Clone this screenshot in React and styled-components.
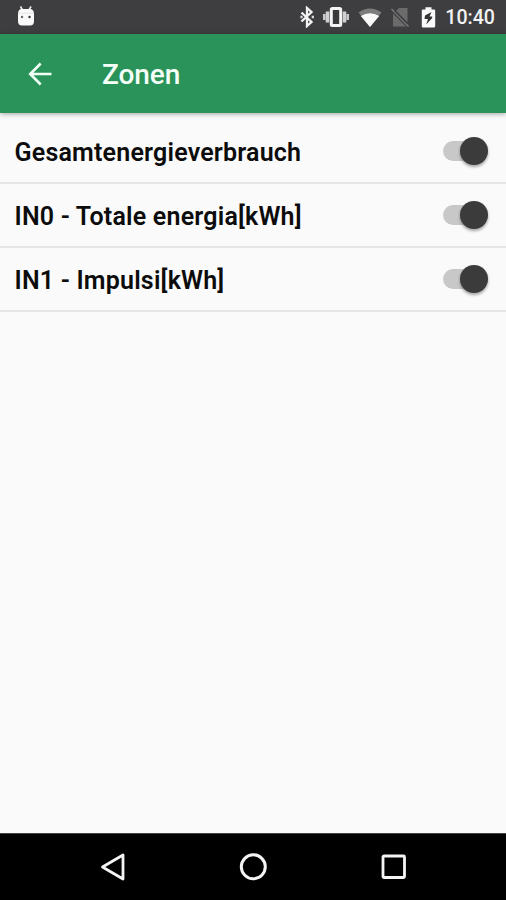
import React, { useState } from 'react';
import styled, { createGlobalStyle } from 'styled-components';

const GlobalStyle = createGlobalStyle`
  * {
    box-sizing: border-box;
  }

  body {
    margin: 0;
    background-color: #fafafa;
    font-family: Roboto, 'Liberation Sans', sans-serif;
  }
`;

const Screen = styled.div`
  display: flex;
  flex-direction: column;
  width: 506px;
  height: 900px;
  overflow: hidden;
  background-color: #fafafa;
`;

const StatusBar = styled.div`
  display: flex;
  align-items: center;
  justify-content: space-between;
  height: 34px;
  padding: 0 11px 0 16px;
  background-color: #3e3e40;
`;

const StatusIcons = styled.div`
  display: flex;
  align-items: center;
`;

const StatusIcon = styled.svg`
  display: block;
  margin-right: ${({ $gap }) => $gap || 0}px;
`;

const Clock = styled.span`
  color: #f2f2f2;
  font-size: 19.6px;
  font-weight: 500;
  line-height: 34px;
  padding-top: 2px;
`;

const AppBar = styled.header`
  display: flex;
  align-items: center;
  height: 79px;
  padding-left: 28px;
  background-color: #2a9359;
  box-shadow: 0 1px 5px rgba(0, 0, 0, 0.35);
`;

const BackButton = styled.button`
  display: flex;
  width: 24px;
  height: 24px;
  margin-right: 50px;
  padding: 0;
  border: 0;
  background: none;
`;

const Title = styled.h1`
  margin: 0;
  padding-top: 2px;
  color: #f5fff8;
  font-size: 28px;
  font-weight: 500;
  letter-spacing: -0.1px;
`;

const ZoneList = styled.main`
  flex: 1;
  padding-top: 7px;
`;

const ZoneRow = styled.div`
  display: flex;
  align-items: center;
  justify-content: space-between;
  height: 64px;
  padding: 0 18px 0 14.5px;
  border-bottom: 2px solid #e6e6e6;
`;

const ZoneName = styled.span`
  color: #0c0c0c;
  font-size: 25px;
  font-weight: 600;
  letter-spacing: 0.2px;
  padding-top: 2px;
`;

const Track = styled.button`
  display: flex;
  align-items: center;
  justify-content: ${({ $on }) => ($on ? 'flex-end' : 'flex-start')};
  width: 45px;
  height: 20px;
  padding: 0;
  border: 0;
  border-radius: 10px;
  background-color: #c8c8c8;
`;

const Knob = styled.span`
  flex: none;
  width: 28px;
  height: 28px;
  border-radius: 50%;
  background-color: #3b3b3b;
  box-shadow: 0 2px 3px rgba(0, 0, 0, 0.35);
`;

const NavBar = styled.nav`
  display: flex;
  align-items: center;
  justify-content: center;
  gap: 113px;
  height: 67px;
  background-color: #000;
  border-top: 1px solid #444;
`;

const NavButton = styled.button`
  display: flex;
  padding: 0;
  border: 0;
  background: none;
`;

const zones = ['Gesamtenergieverbrauch', 'IN0 - Totale energia[kWh]', 'IN1 - Impulsi[kWh]'];

function DebugIcon() {
  return (
    <StatusIcon width="20" height="22" viewBox="0 0 20 22">
      <path d="M4.500 0.500 6.500 4M15 0.500 13 4" stroke="#eee" strokeWidth="1.600" />
      <path d="M2 8Q2 3 6 3H13.500Q18 3 18 8V15Q18 19.500 14 19.500H6Q2 19.500 2 15Z" fill="#fafafa" />
      <path d="M2 7.200H18" stroke="#ddd" strokeWidth="0.800" />
      <circle cx="6" cy="11" r="1.200" fill="#666" />
      <circle cx="13.500" cy="11" r="1.200" fill="#333" />
    </StatusIcon>
  );
}

function BluetoothIcon() {
  return (
    <StatusIcon $gap={7} width="16" height="22" viewBox="0 0 16 22">
      <path d="M2.500 6.500 12.500 16 8 20V2L12.500 6 2.500 15.500" fill="none" stroke="#f4f4f4" strokeWidth="2.300" />
      <path d="M2.500 9.800v2.400M13.800 9.800v2.400" stroke="#ddd" strokeWidth="2.200" />
    </StatusIcon>
  );
}

function VibrateIcon() {
  return (
    <StatusIcon $gap={7} width="28" height="22" viewBox="0 0 28 22">
      <path d="M5.500 5.500v11M22.500 5.500v11" stroke="#d0d0d0" strokeWidth="3.600" />
      <path d="M2.300 8v6M25.700 8v6" stroke="#c8c8c8" strokeWidth="2.600" />
      <rect x="9.300" y="2.500" width="9.400" height="17" rx="1" fill="#3a3a3c" stroke="#f4f4f4" strokeWidth="3" />
    </StatusIcon>
  );
}

function WifiIcon() {
  return (
    <StatusIcon $gap={7} width="26" height="22" viewBox="0 0 26 22">
      <path d="M1.500 6.500Q13-1.500 24.500 6.500L13 21Z" fill="#7d7d7e" />
      <path d="M3.800 10Q13 4.500 22.200 10L13 21Z" fill="#fafafa" />
    </StatusIcon>
  );
}

function NoSimIcon() {
  return (
    <StatusIcon $gap={11} width="20" height="22" viewBox="0 0 20 22">
      <path d="M9 2H17.500V16.500L6 5Z" fill="#6b6b6c" />
      <path d="M3 7.500 16 20.500H3Z" fill="#6b6b6c" />
      <path d="M1.500 3 18.500 20.500" stroke="#78787a" strokeWidth="1.600" />
      <path d="M5 5 17.500 17.500" stroke="#3e3e40" strokeWidth="1.400" />
    </StatusIcon>
  );
}

function BatteryIcon() {
  return (
    <StatusIcon $gap={9} width="15" height="22" viewBox="0 0 15 22">
      <path d="M4.500 1.200h6v2.200h2.500q1.200 0 1.200 1.200v15.600q0 1.200-1.200 1.200H2q-1.200 0-1.200-1.200V4.600Q.800 3.400 2 3.400h2.500Z" fill="#fafafa" />
      <path d="M10.500 6 4 9.500 3.500 13H7L5.200 18.500 11.200 12V10.500H8.500Z" fill="#343436" />
    </StatusIcon>
  );
}

function Zone({ name }) {
  const [on, setOn] = useState(true);

  return (
    <ZoneRow>
      <ZoneName>{name}</ZoneName>
      <Track role="switch" aria-checked={on} aria-label={name} $on={on} onClick={() => setOn(!on)}>
        <Knob />
      </Track>
    </ZoneRow>
  );
}

function App() {
  return (
    <Screen>
      <GlobalStyle />
      <StatusBar>
        <DebugIcon />
        <StatusIcons>
          <BluetoothIcon />
          <VibrateIcon />
          <WifiIcon />
          <NoSimIcon />
          <BatteryIcon />
          <Clock>10:40</Clock>
        </StatusIcons>
      </StatusBar>

      <AppBar>
        <BackButton aria-label="Zurück">
          <svg width="24" height="24" viewBox="0 0 24 24">
            <path d="M23.500 12H2.500M12.700 1.500 2.200 12 12.700 22.500" fill="none" stroke="#f0fff5" strokeWidth="2.600" />
          </svg>
        </BackButton>
        <Title>Zonen</Title>
      </AppBar>

      <ZoneList>
        {zones.map((name) => (
          <Zone key={name} name={name} />
        ))}
      </ZoneList>

      <NavBar>
        <NavButton aria-label="Back">
          <svg width="28" height="28" viewBox="0 0 28 28">
            <path d="M25 2V26L4.500 14Z" fill="none" stroke="#f4f4f4" strokeWidth="2.800" strokeLinejoin="round" />
          </svg>
        </NavButton>
        <NavButton aria-label="Home">
          <svg width="28" height="28" viewBox="0 0 28 28">
            <circle cx="14.300" cy="13.800" r="12" fill="none" stroke="#f4f4f4" strokeWidth="3" />
          </svg>
        </NavButton>
        <NavButton aria-label="Recents">
          <svg width="28" height="28" viewBox="0 0 28 28">
            <rect x="3" y="3" width="21.500" height="21.500" rx="1" fill="none" stroke="#f4f4f4" strokeWidth="2.800" />
          </svg>
        </NavButton>
      </NavBar>
    </Screen>
  );
}

export default App;
